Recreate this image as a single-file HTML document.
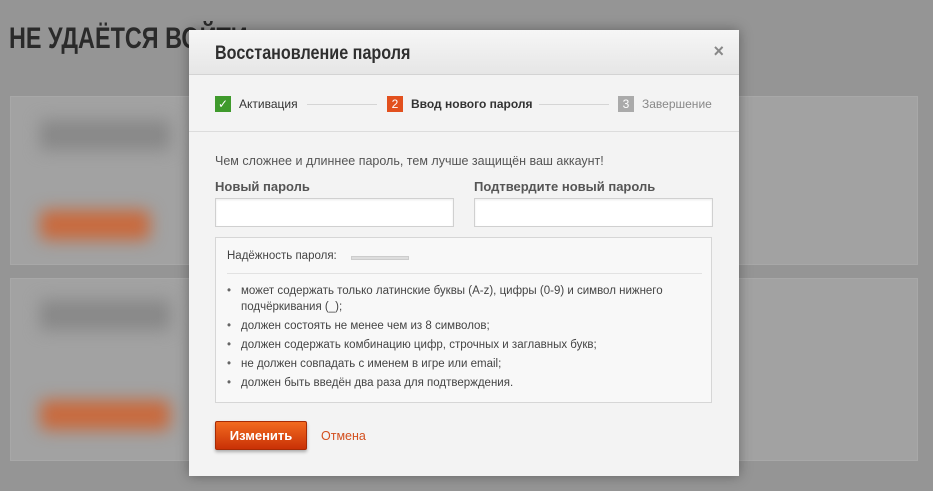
<!DOCTYPE html>
<html><head><meta charset="utf-8"><style>
*{margin:0;padding:0;box-sizing:border-box}
body{width:933px;height:491px;overflow:hidden;background:#959595;font-family:"Liberation Sans",sans-serif;position:relative}
.ttl{position:absolute;left:9px;top:22px;font:bold 30px "Liberation Sans Narrow","Liberation Sans",sans-serif;color:#2a2a2a;transform:scaleX(.78);transform-origin:left}
.pn{position:absolute;background:#a2a2a2;border:1px solid #a8a8a8}
.bl{position:absolute;background:#c86a3e;filter:blur(8px);border-radius:6px}
.gr{position:absolute;background:#888;filter:blur(8px)}
.m{position:absolute;left:189px;top:30px;width:550px;height:446px;background:#f3f3f3;box-shadow:0 0 12px rgba(0,0,0,.35)}
.hd{height:45px;background:linear-gradient(#f6f6f6,#e6e6e6);border-bottom:1px solid #d3d3d3;position:relative}
.hd h1{position:absolute;left:26px;top:13px;font:bold 19px "Liberation Sans Narrow","Liberation Sans",sans-serif;color:#2f2f2f;transform:scaleX(.85);transform-origin:left}
.x{position:absolute;right:15px;top:11px;font-size:18px;color:#888;font-weight:bold}
.st{height:57px;border-bottom:1px solid #dcdcdc;position:relative;font-size:12px}
.s{position:absolute;top:21px;display:flex;align-items:center;gap:8px;color:#333}
.b{width:16px;height:16px;color:#fff;font-size:12px;text-align:center;line-height:16px}
.ln{position:absolute;top:29px;height:1px;background:#d5d5d5}
.in{position:absolute;width:239px;height:29px;background:#fff;border:1px solid #d0d0d0;box-shadow:inset 0 1px 2px rgba(0,0,0,.08)}
.lb{position:absolute;font-weight:bold;font-size:13px;color:#555;top:149px}
.bx{position:absolute;left:26px;top:207px;width:497px;height:166px;background:#f8f8f8;border:1px solid #d6d6d6}
.bx ul{list-style:none;font-size:11.5px;color:#444;position:absolute;left:11px;top:45px;width:470px}
.bx li{padding-left:14px;position:relative;line-height:16px;margin-bottom:3px}
.bx li:before{content:"•";position:absolute;left:0;color:#666}
.btn{position:absolute;left:26px;top:391px;width:92px;height:29px;background:linear-gradient(#f26a1f,#c93106);border:1px solid #a62a05;border-radius:2px;color:#fff;font-weight:bold;font-size:13px;text-align:center;line-height:27px;box-shadow:0 2px 3px rgba(0,0,0,.3)}
</style></head><body>
<div class="ttl">НЕ УДАЁТСЯ ВОЙТИ</div>
<div class="pn" style="left:10px;top:96px;width:908px;height:169px"></div>
<div class="pn" style="left:10px;top:278px;width:908px;height:183px"></div>
<div class="gr" style="left:40px;top:120px;width:130px;height:30px"></div>
<div class="bl" style="left:40px;top:210px;width:110px;height:30px"></div>
<div class="gr" style="left:40px;top:300px;width:130px;height:30px"></div>
<div class="bl" style="left:40px;top:400px;width:130px;height:30px"></div>
<div class="m">
<div class="hd"><h1>Восстановление пароля</h1><div class="x">×</div></div>
<div class="st">
<div class="s" style="left:26px"><div class="b" style="background:#3f9a2c">✓</div>Активация</div>
<div class="ln" style="left:118px;width:70px"></div>
<div class="s" style="left:198px"><div class="b" style="background:#e2501e">2</div><b style="font-weight:bold;color:#333">Ввод нового пароля</b></div>
<div class="ln" style="left:350px;width:70px"></div>
<div class="s" style="left:429px;color:#888"><div class="b" style="background:#aaa">3</div>Завершение</div>
</div>
<div style="position:absolute;left:26px;top:124px;font-size:12.5px;color:#555">Чем сложнее и длиннее пароль, тем лучше защищён ваш аккаунт!</div>
<div class="lb" style="left:26px">Новый пароль</div>
<div class="lb" style="left:285px">Подтвердите новый пароль</div>
<div class="in" style="left:26px;top:168px"></div>
<div class="in" style="left:285px;top:168px"></div>
<div class="bx">
<div style="position:absolute;left:11px;top:12px;font-size:11.5px;color:#444">Надёжность пароля:</div>
<div style="position:absolute;left:135px;top:18px;width:58px;height:4px;background:#ddd;border:1px solid #ccc"></div>
<div style="position:absolute;left:11px;top:35px;width:475px;height:1px;background:#e2e2e2"></div>
<ul>
<li>может содержать только латинские буквы (A-z), цифры (0-9) и символ нижнего подчёркивания (_);</li>
<li>должен состоять не менее чем из 8 символов;</li>
<li>должен содержать комбинацию цифр, строчных и заглавных букв;</li>
<li>не должен совпадать с именем в игре или email;</li>
<li>должен быть введён два раза для подтверждения.</li>
</ul></div>
<div class="btn">Изменить</div>
<div style="position:absolute;left:132px;top:399px;font-size:12.5px;color:#d3501f">Отмена</div>
</div>
</body></html>
